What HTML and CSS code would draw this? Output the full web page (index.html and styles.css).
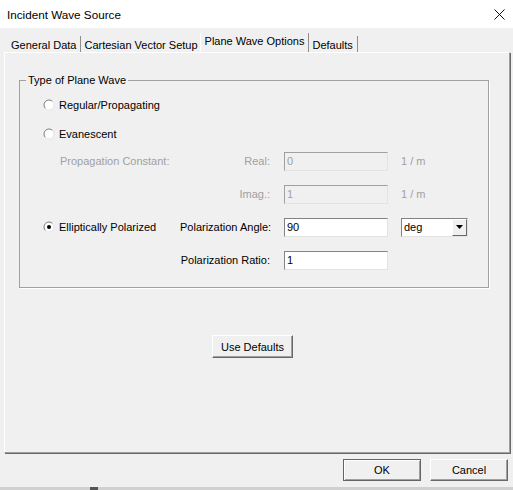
FILE: index.html
```html
<!DOCTYPE html>
<html lang="en">
<head>
    <meta charset="UTF-8">
    <meta name="viewport" content="width=device-width, initial-scale=1.0">
    <title>Incident Wave Source</title>
    <link rel="stylesheet" href="styles.css">
</head>
<body>
    <div class="titlebar">
        <span class="title">Incident Wave Source</span>
        <svg class="close" width="11" height="11" viewBox="0 0 11 11">
            <path d="M0.5 0.5 L10.5 10.5 M10.5 0.5 L0.5 10.5" stroke="#111" stroke-width="1"/>
        </svg>
    </div>

    <div class="tabs">
        <span class="tab">General Data</span>
        <span class="tab">Cartesian Vector Setup</span>
        <span class="tab active">Plane Wave Options</span>
        <span class="tab">Defaults</span>
    </div>

    <div class="panel">
        <fieldset class="group">
            <legend>Type of Plane Wave</legend>
            <div class="group-body">
                <div class="row">
                    <div class="choice">
                        <svg class="radio" width="12" height="12" viewBox="0 0 12 12">
                            <circle cx="6" cy="6" r="5" fill="#fff"/>
                            <path d="M2.46 9.54 A5 5 0 0 1 9.54 2.46" fill="none" stroke="#7a7a7a"/>
                            <path d="M9.54 2.46 A5 5 0 0 1 2.46 9.54" fill="none" stroke="#e6e6e6"/>
                        </svg>
                        <span>Regular/Propagating</span>
                    </div>
                </div>

                <div class="row row-near">
                    <div class="choice">
                        <svg class="radio" width="12" height="12" viewBox="0 0 12 12">
                            <circle cx="6" cy="6" r="5" fill="#fff"/>
                            <path d="M2.46 9.54 A5 5 0 0 1 9.54 2.46" fill="none" stroke="#7a7a7a"/>
                            <path d="M9.54 2.46 A5 5 0 0 1 2.46 9.54" fill="none" stroke="#e6e6e6"/>
                        </svg>
                        <span>Evanescent</span>
                    </div>
                </div>

                <div class="row row-sub">
                    <div class="choice sub disabled">Propagation Constant:</div>
                    <div class="label disabled">Real:</div>
                    <div class="edit disabled">0</div>
                    <div class="unit disabled">1 / m</div>
                </div>

                <div class="row">
                    <div class="choice"></div>
                    <div class="label disabled">Imag.:</div>
                    <div class="edit disabled">1</div>
                    <div class="unit disabled">1 / m</div>
                </div>

                <div class="row">
                    <div class="choice">
                        <svg class="radio" width="12" height="12" viewBox="0 0 12 12">
                            <circle cx="6" cy="6" r="5" fill="#fff"/>
                            <path d="M2.46 9.54 A5 5 0 0 1 9.54 2.46" fill="none" stroke="#7a7a7a"/>
                            <path d="M9.54 2.46 A5 5 0 0 1 2.46 9.54" fill="none" stroke="#e6e6e6"/>
                            <circle cx="6" cy="6" r="2" fill="#000"/>
                        </svg>
                        <span>Elliptically Polarized</span>
                    </div>
                    <div class="label">Polarization Angle:</div>
                    <div class="edit">90</div>
                    <div class="combo">
                        <span class="combo-text">deg</span>
                        <span class="combo-btn">
                            <svg width="7" height="4" viewBox="0 0 7 4"><polygon points="0,0 7,0 3.5,4" fill="#000"/></svg>
                        </span>
                    </div>
                </div>

                <div class="row">
                    <div class="choice"></div>
                    <div class="label">Polarization Ratio:</div>
                    <div class="edit">1</div>
                </div>
            </div>
        </fieldset>

        <div class="actions">
            <button class="btn btn-defaults">Use Defaults</button>
        </div>
    </div>

    <div class="footer">
        <button class="btn btn-ok">OK</button>
        <button class="btn">Cancel</button>
    </div>
    <div class="edge"><span></span></div>
</body>
</html>
```

FILE: styles.css
```css
body {
    margin: 0;
    width: 513px;
    height: 490px;
    overflow: hidden;
    background: #f0f0f0;
    font-family: "Liberation Sans", Arial, sans-serif;
    font-size: 11px;
    color: #000;
}
.titlebar {
    height: 28px;
    background: #fff;
    display: flex;
    align-items: center;
    justify-content: space-between;
    padding: 0 8px 0 7px;
}
.title {
    font-size: 11.7px;
}
.close {
    display: block;
}
.tabs {
    display: flex;
    align-items: flex-end;
    height: 19px;
    margin-top: 5px;
    padding-left: 8px;
}
.tab {
    height: 16px;
    line-height: 18px;
    padding: 0 4px 0 3px;
    border-right: 1px solid #8e8e8e;
    white-space: nowrap;
    background: #f0f0f0;
}
.tab.active {
    height: 19px;
    line-height: 17px;
    padding: 0 4px;
    margin-left: -3px;
    border-left: 1px solid #fff;
}
.panel {
    box-sizing: border-box;
    height: 401px;
    margin: 0 3px 0 4px;
    border: 1px solid;
    border-color: #fff #a0a0a0 #a0a0a0 #fff;
    box-shadow: 1px 1px 0 #696969;
}
.group {
    margin: 21px 20px 0 14px;
    padding: 0;
    border: 1px solid #a0a0a0;
    box-shadow: 1px 1px 0 #fff;
    min-width: 0;
}
.group legend {
    margin-left: 6px;
    padding: 0 2px;
    line-height: 13px;
    background: #f0f0f0;
}
.group-body {
    padding: 8px 0 17px 23px;
}
.row {
    display: flex;
    align-items: center;
    height: 20px;
}
.row + .row {
    margin-top: 13px;
}
.row.row-near {
    margin-top: 9px;
}
.row.row-sub {
    margin-top: 7px;
}
.choice {
    width: 137px;
    display: flex;
    align-items: center;
    gap: 4px;
    white-space: nowrap;
}
.choice.sub {
    padding-left: 17px;
    box-sizing: border-box;
}
.radio {
    display: block;
}
.label {
    width: 90px;
    margin-right: 14px;
    text-align: right;
    white-space: nowrap;
}
.disabled {
    color: #a0a0a0;
}
.edit {
    box-sizing: border-box;
    width: 104px;
    height: 19px;
    margin-right: 13px;
    padding-left: 2px;
    line-height: 17px;
    background: #fff;
    border: 1px solid;
    border-color: #838383 #e3e3e3 #e3e3e3 #838383;
}
.edit.disabled {
    background: #f0f0f0;
    border-color: #a0a0a0 #e3e3e3 #e3e3e3 #a0a0a0;
}
.unit {
    width: 67px;
}
.combo {
    box-sizing: border-box;
    width: 67px;
    height: 19px;
    display: flex;
    background: #fff;
    border: 1px solid;
    border-color: #838383 #e3e3e3 #e3e3e3 #838383;
}
.combo-text {
    flex: 1;
    padding-left: 2px;
    line-height: 17px;
}
.combo-btn {
    width: 13px;
    display: flex;
    align-items: center;
    justify-content: center;
    background: #f0f0f0;
    border: 1px solid;
    border-color: #fff #696969 #696969 #fff;
}
.actions {
    display: flex;
    justify-content: center;
    padding-right: 9px;
    margin-top: 47px;
}
.btn {
    font: inherit;
    color: #000;
    padding: 0;
    background: #f0f0f0;
    border: 1px solid;
    border-color: #fff #696969 #696969 #fff;
    box-shadow: inset -1px -1px 0 #a0a0a0;
}
.btn-defaults {
    width: 81px;
    height: 23px;
}
.footer {
    box-sizing: border-box;
    height: 34px;
    display: flex;
    justify-content: flex-end;
    gap: 9px;
    padding: 6px 5px 0 0;
}
.footer .btn {
    width: 78px;
    height: 22px;
}
.footer .btn-ok {
    border-color: #646464;
    box-shadow: inset 1px 1px 0 #fff, inset -1px -1px 0 #a0a0a0;
}
.edge {
    height: 3px;
    background: #d0d0d0;
}
.edge span {
    display: block;
    width: 8px;
    height: 3px;
    margin-left: 90px;
    background: #555;
}
```
